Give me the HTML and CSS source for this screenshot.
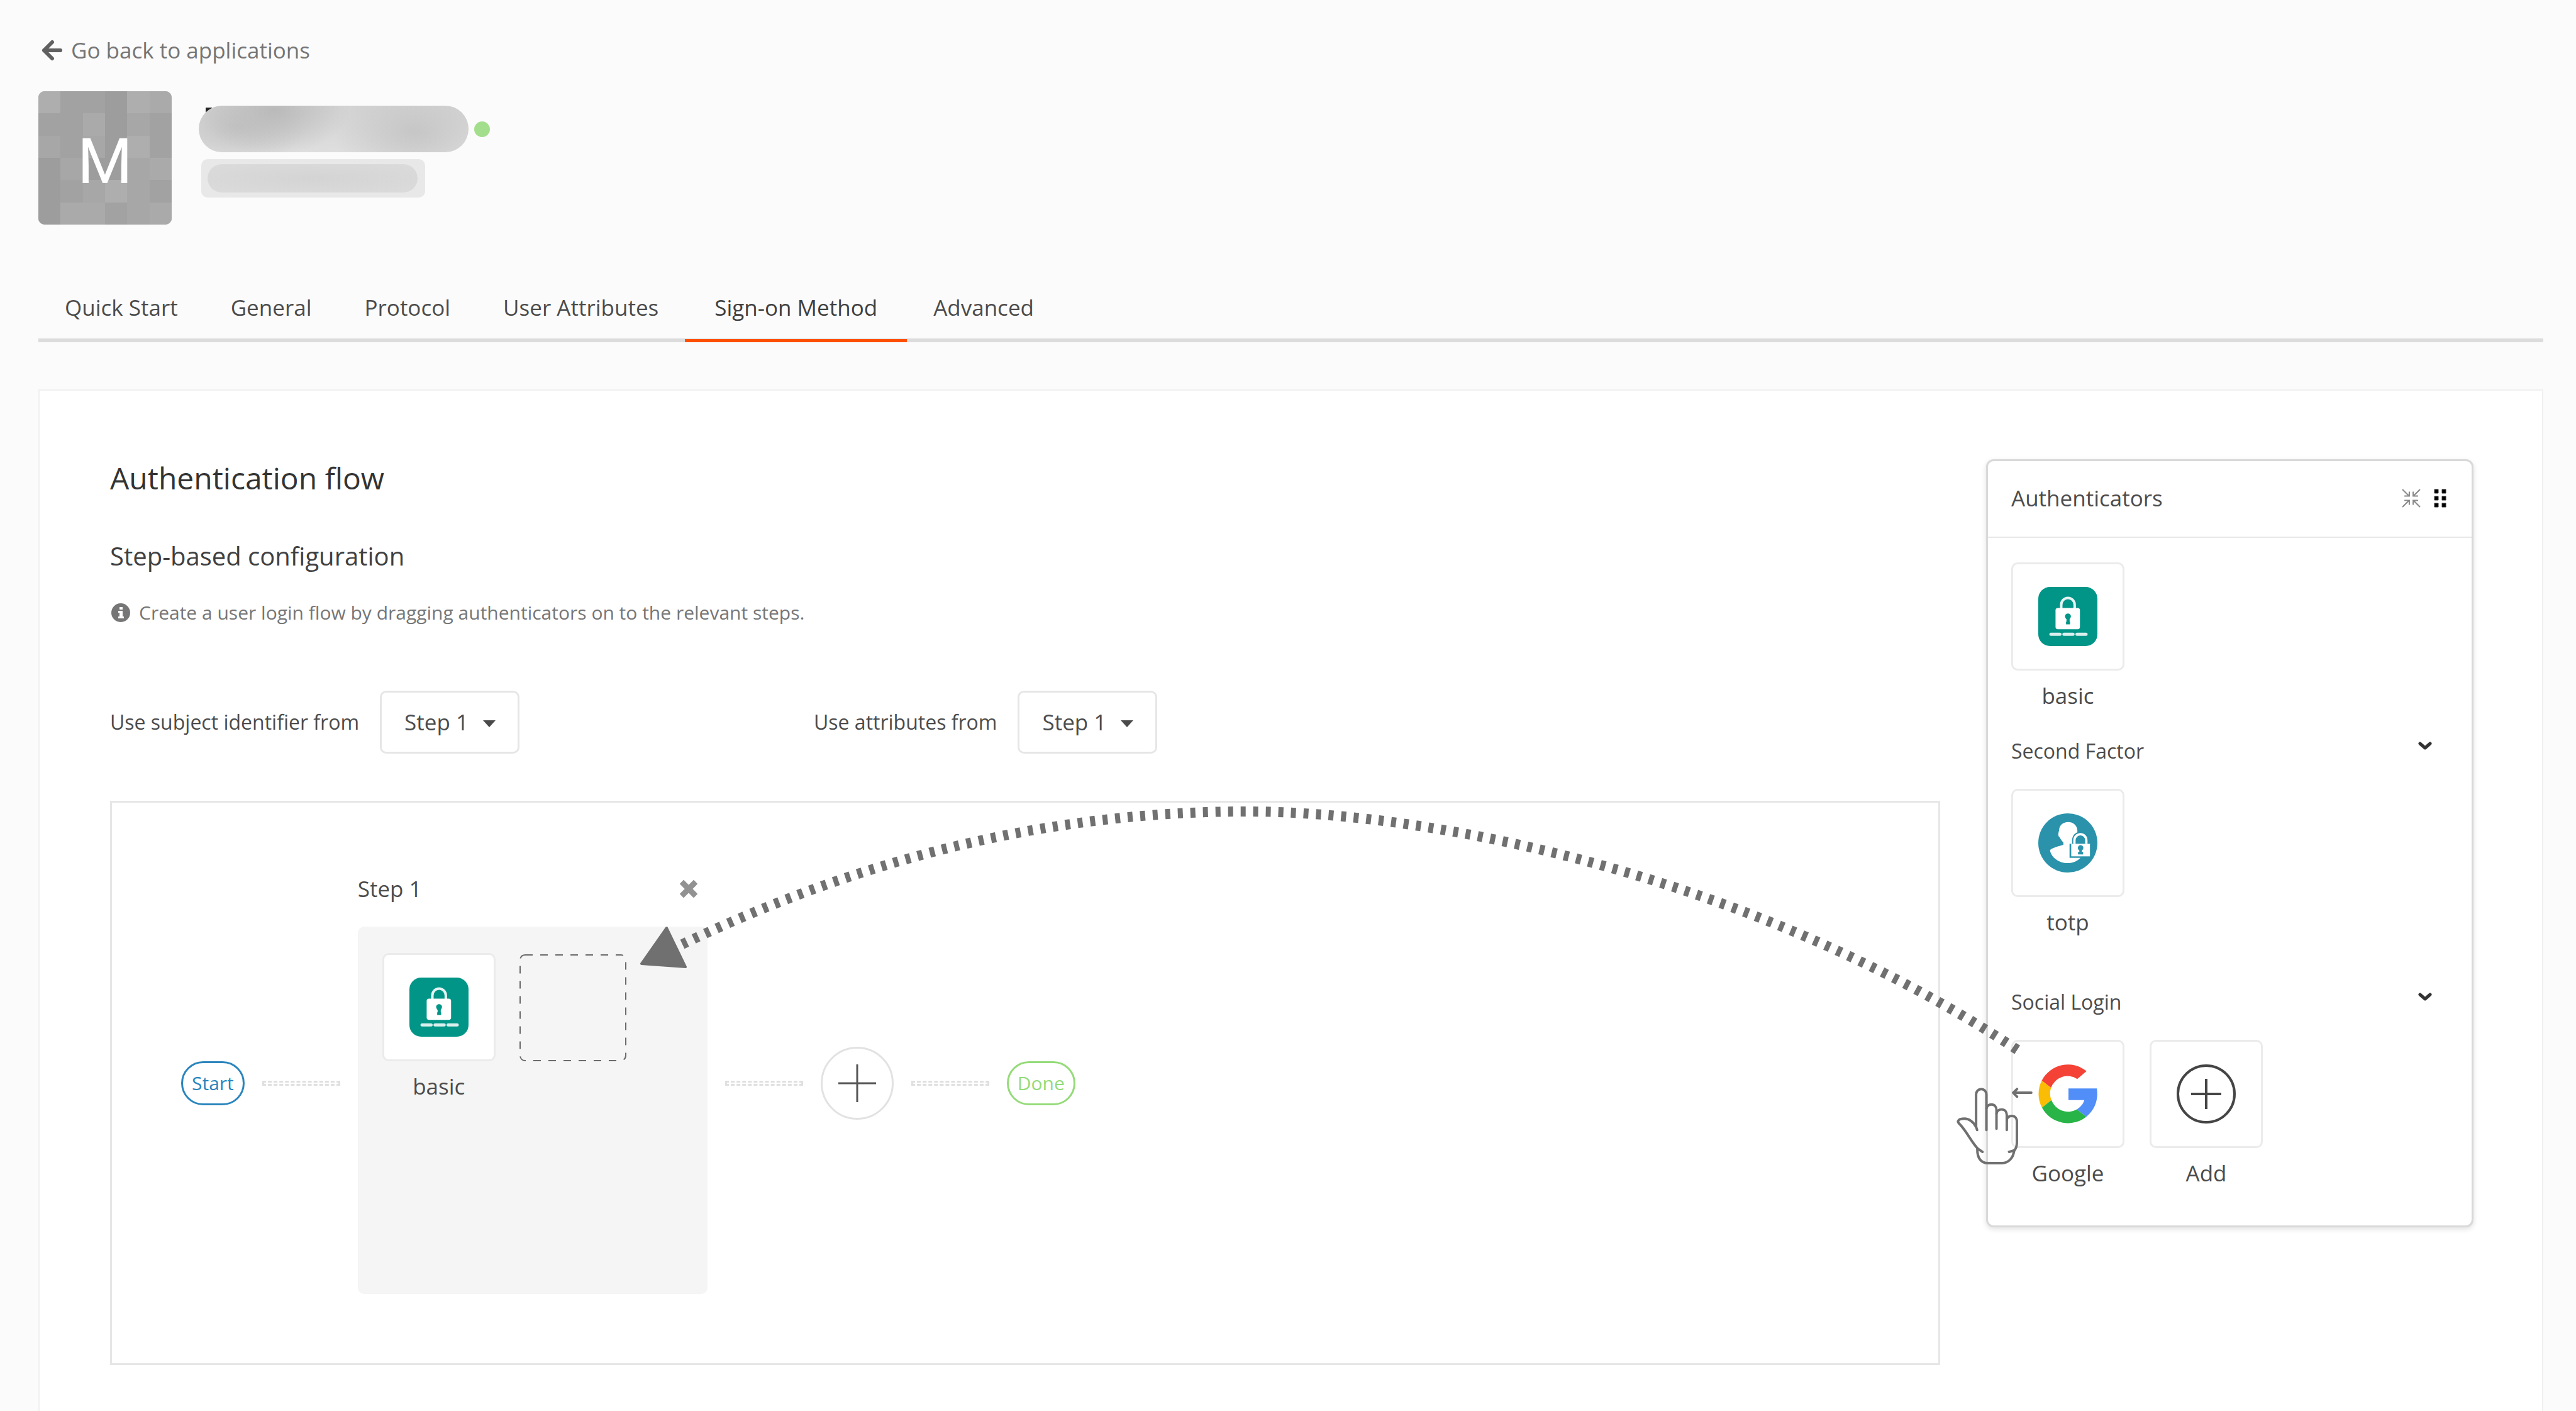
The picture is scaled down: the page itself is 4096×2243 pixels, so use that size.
FILE: index.html
```html
<!DOCTYPE html>
<html lang="en">
<head>
<meta charset="utf-8">
<title>Sign-on Method</title>
<link rel="stylesheet" href="styles.css">
</head>
<body>
<svg class="defs" aria-hidden="true">
  <symbol id="icon-basic" viewBox="0 0 281 281">
    <rect width="281" height="281" rx="56" fill="#009587"/>
    <path d="M109 106V86a32 34 0 0 1 64 0v20" fill="none" stroke="#e6f4f3" stroke-width="12"/>
    <rect x="82" y="100" width="116" height="101" rx="11" fill="#fff"/>
    <circle cx="141" cy="140" r="14" fill="#009587"/>
    <path d="M134 145h15v20h2v13h-19v-13h2z" fill="#009587"/>
    <path d="M60 225h43M122 225h43M184 225h43" stroke="#d9efed" stroke-width="15" stroke-linecap="round"/>
  </symbol>
  <symbol id="icon-totp" viewBox="0 0 278 278">
    <circle cx="139" cy="139" r="139" fill="#2a93ab"/>
    <path d="M98 80C98 56 117 41 141 41s43 17 43 42c0 12-4 20-10 28l-14 89h46c-17 21-39 34-66 34-45 0-81-30-85-62 15-12 40-17 63-24v-11c-8-8-13-16-17-24-9-6-8-17-3-33z" fill="#fff"/>
    <path d="M170 146v-20a28 29 0 0 1 56 0v20z" fill="#2a93ab" stroke="#2a93ab" stroke-width="22"/>
    <path d="M170 146v-20a28 28 0 0 1 56 0v20" fill="none" stroke="#fff" stroke-width="11"/>
    <rect x="147" y="143" width="96" height="66" fill="#2a93ab"/>
    <rect x="155" y="143" width="88" height="59" fill="#fff"/>
    <circle cx="199" cy="162" r="13" fill="#2a93ab"/>
    <path d="M193 168h12v13h6v12h-24v-12h6z" fill="#2a93ab"/>
  </symbol>
  <symbol id="icon-chevron" viewBox="0 0 22 15">
    <path d="M3 4l8 7 8-7" fill="none" stroke="#333" stroke-width="5" stroke-linecap="round" stroke-linejoin="round"/>
  </symbol>
  <symbol id="icon-caret" viewBox="0 0 20 11">
    <path d="M0 0h20L10 11z" fill="#4a4a4a"/>
  </symbol>
</svg>

<a class="back" href="#">
  <svg class="back-arrow" viewBox="0 0 34 34"><path d="M31 17H5M18 4L5 17l13 13" fill="none" stroke="#606060" stroke-width="6" stroke-linecap="round" stroke-linejoin="round"/></svg>
  Go back to applications
</a>

<header class="app-header">
  <div class="avatar">
    <svg class="avatar-mosaic" viewBox="0 0 6 6" shape-rendering="crispEdges">
      <rect width="6" height="6" fill="#a7a7a7"/>
      <path d="M0 0h1v1H0zM4 0h1v1H4zM4 2h1v1H4zM3 4h1v1H3z" fill="#aeaeae"/>
      <path d="M5 0h1v1H5zM2 1h1v1H2zM5 3h1v1H5zM1 5h2v1H1zM5 5h1v1H5z" fill="#aaaaaa"/>
      <path d="M1 0h2v1H1zM0 1h2v1H0zM5 1h1v2H5zM1 2h1v1H1zM3 5h1v1H3zM5 4h1v1H5zM1 4h1v1H1z" fill="#a2a2a2"/>
      <path d="M3 0h1v3H3zM2 3h1v1H2zM0 3h1v3H0zM3 3h1v1H3z" fill="#9d9d9d"/>
    </svg>
    <span class="avatar-letter">M</span>
  </div>
  <div class="app-meta">
    <div class="name-row"><div class="name-mask"></div><span class="status-dot"></span></div>
    <div class="id-tag"><div class="id-mask"></div></div>
  </div>
</header>

<nav class="tabs">
  <a class="tab" href="#">Quick Start</a>
  <a class="tab" href="#">General</a>
  <a class="tab" href="#">Protocol</a>
  <a class="tab" href="#">User Attributes</a>
  <a class="tab tab-active" href="#">Sign-on Method</a>
  <a class="tab" href="#">Advanced</a>
</nav>

<main class="card">
  <section class="builder">
    <h2 class="title">Authentication flow</h2>
    <h3 class="subtitle">Step-based configuration</h3>
    <p class="hint">
      <svg class="hint-icon" viewBox="0 0 30 30"><circle cx="15" cy="15" r="15" fill="#767676"/><path d="M13 6h5v4h-5zM11 12h7v9h2v3h-9v-3h2v-6h-2z" fill="#fff"/></svg>
      Create a user login flow by dragging authenticators on to the relevant steps.
    </p>
    <form class="options">
      <div class="option">
        <label for="subject">Use subject identifier from</label>
        <span class="select-wrap">
          <select id="subject" class="select"><option>Step 1</option></select>
          <svg class="caret"><use href="#icon-caret"/></svg>
        </span>
      </div>
      <div class="option">
        <label for="attributes">Use attributes from</label>
        <span class="select-wrap">
          <select id="attributes" class="select"><option>Step 1</option></select>
          <svg class="caret"><use href="#icon-caret"/></svg>
        </span>
      </div>
    </form>
    <div class="flow">
      <span class="pill pill-start">Start</span>
      <span class="link"></span>
      <div class="step">
        <div class="step-head">
          <h4 class="step-title">Step 1</h4>
          <button class="icon-button" type="button" aria-label="Remove step">
            <svg class="remove-icon" viewBox="0 0 28 28"><path d="M6 6l16 16M22 6L6 22" stroke="#929292" stroke-width="9" stroke-linecap="square"/></svg>
          </button>
        </div>
        <div class="step-body">
          <div class="item">
            <div class="tile"><svg class="tile-icon"><use href="#icon-basic"/></svg></div>
            <span>basic</span>
          </div>
          <svg class="drop-zone" viewBox="0 0 170 170"><rect x="1" y="1" width="168" height="168" rx="8" fill="none" stroke="#6a6a6a" stroke-width="2" stroke-dasharray="12 12"/></svg>
        </div>
      </div>
      <span class="link"></span>
      <button class="add-step" type="button" aria-label="Add step">
        <svg class="add-step-icon" viewBox="0 0 60 60"><path d="M0 30h60M30 0v60" stroke="#555" stroke-width="3"/></svg>
      </button>
      <span class="link"></span>
      <span class="pill pill-done">Done</span>
    </div>
  </section>

  <aside class="panel">
    <div class="panel-head">
      <h3 class="panel-title">Authenticators</h3>
      <button class="icon-button" type="button" aria-label="Collapse">
        <svg class="collapse-icon" viewBox="0 0 88 88"><path d="M3 3l31 31M12 34h23V13M85 3L54 34M76 34H53V13M3 85l31-31M12 54h23v21M85 85L54 54M76 54H53v21" fill="none" stroke="#8a8a8a" stroke-width="6"/></svg>
      </button>
      <svg class="drag-icon" viewBox="0 0 20 30"><path d="M1 1h6v6H1zM13 1h6v6h-6zM1 12h6v6H1zM13 12h6v6h-6zM1 23h6v6H1zM13 23h6v6h-6z" fill="#000" stroke="#333"/></svg>
    </div>
    <div class="panel-body">
      <div class="group">
        <div class="item">
          <div class="tile"><svg class="tile-icon"><use href="#icon-basic"/></svg></div>
          <span>basic</span>
        </div>
      </div>
      <div class="group-head">
        <h4 class="group-title">Second Factor</h4>
        <svg class="chevron"><use href="#icon-chevron"/></svg>
      </div>
      <div class="group group-spaced">
        <div class="item">
          <div class="tile"><svg class="tile-icon"><use href="#icon-totp"/></svg></div>
          <span>totp</span>
        </div>
      </div>
      <div class="group-head">
        <h4 class="group-title">Social Login</h4>
        <svg class="chevron"><use href="#icon-chevron"/></svg>
      </div>
      <div class="group">
        <div class="item">
          <div class="tile">
            <svg class="tile-icon" viewBox="444 183 288 288">
              <path d="M461 262A143 143 0 0 1 679 216L634 254A86 86 0 0 0 506 297z" fill="#f44336"/>
              <path d="M461 262A144 144 0 0 0 462 394L508 357A86 86 0 0 1 506 297z" fill="#fbbc05"/>
              <path d="M462 394A144 144 0 0 0 678 438L632 402A86 86 0 0 1 508 357z" fill="#28b446"/>
              <path d="M591 300H729C738 352 721 402 678 438L632 402C650 391 663 376 668 357H591z" fill="#518ef8"/>
            </svg>
          </div>
          <span>Google</span>
        </div>
        <div class="item">
          <button class="tile" type="button" aria-label="Add authenticator">
            <svg class="tile-icon" viewBox="0 0 94 94"><circle cx="47" cy="47" r="45" fill="none" stroke="#454545" stroke-width="4"/><path d="M23 47h48M47 23v48" stroke="#454545" stroke-width="4"/></svg>
          </button>
          <span>Add</span>
        </div>
      </div>
    </div>
  </aside>

  <svg class="drag-guide" viewBox="1010 1270 2250 600" aria-hidden="true">
    <path d="M1085 1501C1385 1358 1682 1290 1982 1290S2795 1396 3208 1669" fill="none" stroke="#707070" stroke-width="16" stroke-dasharray="8 12"/>
    <path d="M1020 1532L1060 1475L1090 1537z" fill="#707070" stroke="#707070" stroke-width="4" stroke-linejoin="round"/>
    <g transform="translate(3094 1631) scale(.3274)" fill="none" stroke="#707070" stroke-width="12" stroke-linecap="round" stroke-linejoin="round">
      <path d="M152 505l-5-15V332a25 26 0 0 1 50 0v173"/>
      <path d="M147 490C130 460 110 450 90 450C62 450 54 461 63 472C100 508 125 565 155 595L178 611"/>
      <path d="M153 597C152 640 170 666 205 666H272C305 666 328 640 332 603"/>
      <path d="M197 400C200 388 208 381 221 381C237 381 246 392 246 408V499"/>
      <path d="M246 425C249 412 257 405 271 405C287 405 296 417 296 432V505"/>
      <path d="M296 455C299 443 307 437 320 437C336 437 345 448 345 463V567C345 582 340 595 333 604L307 611"/>
      <path d="M415 324H327M346 306L327 324L346 343"/>
    </g>
  </svg>
</main>
</body>
</html>
```
FILE: styles.css
```css
* {
  box-sizing: border-box;
}

body {
  display: flex;
  flex-direction: column;
  min-height: 100vh;
  margin: 0;
  padding: 56px 52px 0 61px;
  background: #fbfbfb;
  color: #4c4c4c;
  font: 35px/48px "Open Sans", "Noto Sans", sans-serif;
}

h2, h3, h4, p {
  margin: 0;
  font-weight: 400;
}

button {
  padding: 0;
  border: 0;
  background: none;
  cursor: pointer;
}

svg {
  display: block;
  flex: none;
}

.defs {
  position: absolute;
  width: 0;
  height: 0;
}

.back {
  display: flex;
  align-items: center;
  align-self: flex-start;
  gap: 14px;
  padding-left: 4px;
  color: #757575;
  text-decoration: none;
}

.back-arrow {
  width: 34px;
  height: 34px;
}

.app-header {
  display: flex;
  gap: 43px;
  margin-top: 41px;
}

.avatar {
  display: grid;
  place-items: center;
  width: 212px;
  height: 212px;
  border-radius: 10px;
  overflow: hidden;
}

.avatar-mosaic,
.avatar-letter {
  grid-area: 1 / 1;
}

.avatar-mosaic {
  width: 212px;
  height: 212px;
}

.avatar-letter {
  z-index: 1;
  padding-top: 12px;
  color: #fff;
  font: 100px/120px Roboto, sans-serif;
}

.app-meta {
  display: flex;
  flex-direction: column;
  gap: 11px;
  padding-top: 23px;
}

.name-row {
  display: flex;
  align-items: center;
  gap: 9px;
  position: relative;
  z-index: 0;
}

.name-row::before {
  content: "";
  position: absolute;
  z-index: -1;
  top: 3px;
  left: 11px;
  width: 10px;
  height: 12px;
  background: #222;
}

.name-mask {
  width: 429px;
  height: 74px;
  border-radius: 37px;
  background:
    radial-gradient(120px 70px at 28% 10%, #bababa, transparent),
    radial-gradient(130px 80px at 80% 55%, #c6c6c6, transparent),
    radial-gradient(110px 60px at 14% 45%, #c4c4c4, transparent),
    linear-gradient(#d4d4d4, #dedede);
}

.status-dot {
  width: 25px;
  height: 25px;
  border-radius: 50%;
  background: #a3de8c;
}

.id-tag {
  width: 356px;
  height: 61px;
  margin-left: 4px;
  padding: 8px 12px 8px 10px;
  border-radius: 10px;
  background: #e8e8e8;
}

.id-mask {
  height: 45px;
  border-radius: 23px;
  background: radial-gradient(#d4d4d4, #dbdbdb);
}

.tabs {
  display: flex;
  margin-top: 108px;
  border-bottom: 6px solid #dcdcdc;
}

.tab {
  margin-bottom: -6px;
  padding: 0 42px 26px;
  border-bottom: 5px solid transparent;
  color: #4c4c4c;
  text-decoration: none;
}

.tab-active {
  padding: 0 47px 26px;
  border-color: #ff5000;
  color: #404040;
}

.card {
  display: grid;
  grid-template-columns: 1fr 775px;
  gap: 73px;
  flex: 1;
  align-items: start;
  position: relative;
  margin-top: 75px;
  padding: 109px 109px 71px 112px;
  border: 2px solid #f0f0f0;
  border-bottom: 0;
  background: #fff;
}

.title {
  color: #333;
  font-size: 48px;
  line-height: 60px;
}

.subtitle {
  margin-top: 68px;
  color: #404040;
  font-size: 40px;
  line-height: 52px;
}

.hint {
  display: flex;
  align-items: center;
  gap: 14px;
  margin-top: 44px;
  padding-left: 2px;
  color: #767676;
  font-size: 30px;
  line-height: 40px;
}

.hint-icon {
  width: 30px;
  height: 30px;
}

.options {
  display: flex;
  margin-top: 104px;
}

.option {
  display: flex;
  align-items: center;
  gap: 33px;
  width: 1119px;
  font-size: 32px;
}

.select-wrap {
  position: relative;
}

.select {
  display: block;
  width: 222px;
  height: 100px;
  padding: 0 36px;
  border: 3px solid #e6e6e6;
  border-radius: 10px;
  appearance: none;
  background: #fff;
  color: #4c4c4c;
  font: inherit;
  font-size: 35px;
}

.caret {
  position: absolute;
  top: 47px;
  right: 38px;
  width: 20px;
  height: 11px;
  pointer-events: none;
}

.flow {
  display: flex;
  align-items: center;
  gap: 28px;
  min-height: 897px;
  margin-top: 75px;
  padding: 0 110px;
  border: 3px solid #e6e6e6;
}

.pill {
  padding: 0 14px;
  border: 3px solid;
  border-radius: 35px;
  font-size: 30px;
  line-height: 64px;
}

.pill-start {
  color: #2a85bd;
}

.pill-done {
  color: #94db78;
}

.link {
  width: 124px;
  height: 8px;
  border: 3px dashed #e0e0e0;
}

.step {
  width: 556px;
}

.step-head {
  display: flex;
  align-items: center;
  justify-content: space-between;
  margin-bottom: 33px;
  padding-right: 16px;
}

.step-title {
  font-size: 35px;
  line-height: 54px;
}

.remove-icon {
  width: 28px;
  height: 28px;
}

.step-body {
  display: flex;
  align-items: flex-start;
  gap: 38px;
  height: 584px;
  padding: 42px 39px;
  border-radius: 10px;
  background: #f5f5f5;
}

.item {
  display: flex;
  flex-direction: column;
  align-items: center;
  gap: 16px;
  width: 180px;
}

.tile {
  display: grid;
  place-items: center;
  width: 180px;
  height: 172px;
  border: 3px solid #ebebeb;
  border-radius: 10px;
  background: #fff;
}

.tile-icon {
  width: 94px;
  height: 94px;
}

.drop-zone {
  width: 170px;
  height: 170px;
  margin-top: 2px;
}

.add-step {
  display: grid;
  place-items: center;
  width: 116px;
  height: 116px;
  border: 3px solid #e2e2e2;
  border-radius: 50%;
}

.add-step-icon {
  width: 60px;
  height: 60px;
}

.panel {
  border: 3px solid #d9d9d9;
  border-radius: 12px;
  background: #fff;
  box-shadow: 0 3px 8px rgba(0, 0, 0, 0.12);
}

.panel-head {
  display: flex;
  align-items: center;
  gap: 21px;
  height: 122px;
  padding: 0 40px 2px 37px;
  border-bottom: 2px solid #e8e8e8;
}

.panel-title {
  flex: 1;
  font-size: 35px;
}

.collapse-icon {
  width: 30px;
  height: 30px;
}

.drag-icon {
  width: 20px;
  height: 30px;
}

.panel-body {
  padding: 39px 37px 59px;
}

.group {
  display: flex;
  gap: 40px;
}

.group-spaced {
  margin-bottom: 81px;
}

.group + .group-head {
  margin-top: 42px;
}

.group-spaced + .group-head {
  margin-top: 0;
}

.group-head {
  display: flex;
  justify-content: space-between;
  margin-bottom: 38px;
  padding-right: 26px;
}

.group-title {
  font-size: 32px;
  line-height: 44px;
}

.chevron {
  width: 22px;
  height: 15px;
  margin-top: 6px;
}

/* The dotted guide and hand lie over both the flow and the panel. */
.drag-guide {
  position: absolute;
  top: 649px;
  right: 782px;
  width: 2250px;
  height: 600px;
  pointer-events: none;
}
```
